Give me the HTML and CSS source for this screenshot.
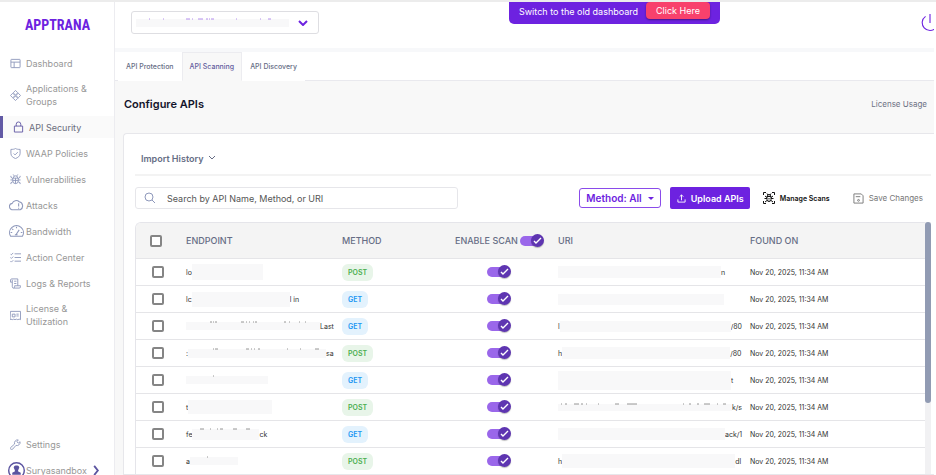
FILE: index.html
```html
<!DOCTYPE html>
<html lang="en">
<head>
    <meta charset="UTF-8">
    <meta name="viewport" content="width=device-width, initial-scale=1.0">
    <title>AppTrana - API Scanning</title>
    <link rel="stylesheet" href="styles.css">
</head>
<body>
    <div class="app">
        <aside class="sidebar">
            <a class="logo" href="#">APPTRANA</a>
            <nav class="menu">
                <a class="menu-item" href="#">
                    <svg viewBox="0 0 24 24"><rect x="2" y="3" width="20" height="18" rx="1"/><path d="M2 9h20M9 9v12"/></svg>
                    <span>Dashboard</span>
                </a>
                <a class="menu-item" href="#">
                    <svg viewBox="0 0 24 24"><path d="M12 1l5 5-5 5-5-5zM12 13l5 5-5 5-5-5zM6 7l5 5-5 5-5-5zM18 7l5 5-5 5-5-5z"/></svg>
                    <span>Applications &amp; Groups</span>
                </a>
                <a class="menu-item active" href="#">
                    <svg viewBox="0 0 24 24"><path d="M3 10h18v13H3zM7 10V6a5 5 0 0 1 10 0v4"/></svg>
                    <span>API Security</span>
                </a>
                <a class="menu-item" href="#">
                    <svg viewBox="0 0 24 24"><path d="M12 1c-3 2-6 2-10 2v9c0 6 5 9 10 11 5-2 10-5 10-11V3c-4 0-7 0-10-2zM8 12l3 3 6-6"/></svg>
                    <span>WAAP Policies</span>
                </a>
                <a class="menu-item" href="#">
                    <svg viewBox="0 0 24 24"><path d="M6 9h12v6a6 6 0 0 1-12 0zM7 9a5 5 0 0 1 10 0M12 9v12M6 14h12M1 13h5M18 13h5M6 10L2 7V4M18 10l4-3V4M6 17l-4 2v3M18 17l4 2v3M9 4L7 1M15 4l2-3"/></svg>
                    <span>Vulnerabilities</span>
                </a>
                <a class="menu-item wide" href="#">
                    <svg viewBox="0 0 28 24"><path d="M8 20a6 6 0 0 1-2-12 8 8 0 0 1 13-3 8 8 0 0 1 2 15H8M18 8v6M18 16v2"/></svg>
                    <span>Attacks</span>
                </a>
                <a class="menu-item wide" href="#">
                    <svg viewBox="0 0 28 24"><path d="M3 21a13 13 0 1 1 22 0zM13 18l6-9M14 3v3M3 14h3M22 14h3M6 7l2 2M11 18h5"/></svg>
                    <span>Bandwidth</span>
                </a>
                <a class="menu-item" href="#">
                    <svg viewBox="0 0 24 24"><path d="M10 4h14M10 12h14M10 20h14M1 4l2 2 4-4M1 12l2 2 4-4M1 20l2 2 4-4"/></svg>
                    <span>Action Center</span>
                </a>
                <a class="menu-item" href="#">
                    <svg viewBox="0 0 24 24"><path d="M5 9H1V4a3 3 0 0 1 3-2h13v15M5 4v15a3 3 0 0 0 3 3h12a3 3 0 0 0 3-3v-2H10v2a3 3 0 0 1-2 3M9 7h5M9 12h5"/></svg>
                    <span>Logs &amp; Reports</span>
                </a>
                <a class="menu-item" href="#">
                    <svg viewBox="0 0 24 24"><path d="M1 3h22v18l-3-1-3 1-3-1-3 1-3-1-3 1-3-1-2 1zM5 9h6v6H5zM14 9h5M14 13h5"/></svg>
                    <span>License &amp; Utilization</span>
                </a>
            </nav>
            <div class="menu menu-bottom">
                <a class="menu-item" href="#">
                    <svg viewBox="0 0 24 24"><path d="M22 6l-4 3-3-3 3-4a7 7 0 0 0-8 9l-9 8a3 3 0 0 0 4 4l8-9a7 7 0 0 0 9-8zM4 20h1"/></svg>
                    <span>Settings</span>
                </a>
                <a class="menu-item user" href="#">
                    <svg class="avatar" viewBox="0 0 24 24"><circle cx="12" cy="12" r="11"/><path class="person" d="M12 5a3 3 0 0 1 3 5l-1 3 4 2v3H6v-3l4-2-1-3a3 3 0 0 1 3-5z"/></svg>
                    <span>Suryasandbox</span>
                    <svg class="chevron" viewBox="0 0 8 12"><path d="M2 1l4 5-4 5"/></svg>
                </a>
            </div>
        </aside>

        <main class="main">
            <header class="topbar">
                <button class="site-select" type="button" aria-label="Select site">
                    <span class="mask site-mask"><svg class="trace" width="160" height="2"><path d="M13 1h1M27 1h1M50 1h4M56 1h1M62 1h5M70 1h2M73 1h1M75 1h3M100 1h1M124 1h1M132 1h3"/></svg></span>
                    <svg class="site-arrow" viewBox="0 0 10 6"><path d="M1 1l4 4 4-4"/></svg>
                </button>
                <div class="switch-banner">
                    <span>Switch to the old dashboard</span>
                    <button type="button">Click Here</button>
                </div>
                <button class="power" type="button" aria-label="Log out">
                    <svg viewBox="0 0 18 18"><path d="M9 1v8M5 3a7 7 0 1 0 8 0"/></svg>
                </button>
            </header>

            <nav class="tabs">
                <a class="tab" href="#">API Protection</a>
                <a class="tab active" href="#">API Scanning</a>
                <a class="tab" href="#">API Discovery</a>
            </nav>

            <div class="page-head">
                <h1>Configure APIs</h1>
                <a href="#">License Usage</a>
            </div>

            <section class="card">
                <button class="history" type="button">
                    Import History
                    <svg viewBox="0 0 10 6"><path d="M2 1l3 3 3-3"/></svg>
                </button>

                <div class="toolbar">
                    <div class="search">
                        <svg viewBox="0 0 12 12"><circle cx="5" cy="5" r="4"/><path d="M8 8l3 3"/></svg>
                        <input type="text" aria-label="Search APIs" placeholder="Search by API Name, Method, or URI">
                    </div>
                    <button class="btn method-filter" type="button">Method: All <span class="caret"></span></button>
                    <button class="btn upload" type="button">
                        <svg viewBox="0 0 10 10"><path d="M1 6v3h8V6M5 7V1M3 3l2-2 2 2"/></svg>
                        Upload APIs
                    </button>
                    <button class="btn manage" type="button">
                        <svg viewBox="0 0 24 24"><path d="M1 6V1h5M18 1h5v5M23 18v5h-5M6 23H1v-5M8 9h8v6a4 4 0 0 1-8 0zM9 8a3 3 0 0 1 6 0M4 8l4 3M20 8l-4 3M3 13h5M16 13h5M4 20l4-3M20 20l-4-3M8 3l2 3M16 3l-2 3M11 13h2M11 16h2"/></svg>
                        Manage Scans
                    </button>
                    <button class="btn save" type="button" disabled>
                        <svg viewBox="0 0 12 12"><path d="M1 1h8l2 2v8H1zM3 4h5"/><circle cx="6" cy="8" r="1"/></svg>
                        Save Changes
                    </button>
                </div>

                <div class="table-wrap">
                    <table>
                        <colgroup>
                            <col class="col-check">
                            <col class="col-endpoint">
                            <col class="col-method">
                            <col class="col-scan">
                            <col class="col-uri">
                            <col>
                        </colgroup>
                        <thead>
                            <tr>
                                <th><input class="check" type="checkbox" aria-label="Select all"></th>
                                <th>ENDPOINT</th>
                                <th>METHOD</th>
                                <th><label class="scan-all">ENABLE SCAN <input class="toggle" type="checkbox" checked></label></th>
                                <th>URI</th>
                                <th>FOUND ON</th>
                            </tr>
                        </thead>
                        <tbody id="api-rows"></tbody>
                    </table>
                    <div class="scrollbar"><div class="thumb"></div></div>
                </div>
            </section>
        </main>
    </div>

    <script>
        // text before the mask, mask width, mask height, text after the mask, marks above the mask
        const apis = [
            { method: 'POST', endpoint: ['lo', 71, 16, ''], uri: ['', 163, 12, 'n'] },
            { method: 'GET', endpoint: ['lc', 98, 15, 'l in'], uri: ['', 166, 11, ''] },
            { method: 'GET', endpoint: ['', 134, 8, 'Last', 'M24 1h2M27 1h1M29 1h2M55 1h3M60 1h1M63 1h1M67 1h1M69 1h2M98 1h2M103 1h1M113 1h1M119 1h1'], uri: ['l', 171, 11, '/80'] },
            { method: 'POST', endpoint: [':', 138, 9, 'sa', 'M25 1h1M27 1h3M58 1h3M63 1h1M66 1h1M70 1h2M99 1h1M112 1h1M127 1h4'], uri: ['h', 168, 12, '/80'] },
            { method: 'GET', endpoint: ['', 82, 8, '', 'M27 1h1'], uri: ['', 173, 19, 't'] },
            { method: 'POST', endpoint: ['t', 84, 14, ''], uri: ['', 174, 7, 'k/s', 'M3 1h1M7 1h2M16 1h5M23 1h2M28 1h1M40 1h1M57 1h4M69 1h10M125 1h1M131 1h2M139 1h2M146 1h6M159 1h1M165 1h3'] },
            { method: 'GET', endpoint: ['fe', 67, 11, 'ck', 'M8 1h4M18 1h1M25 1h1M28 1h3M41 1h4M54 1h4'], uri: ['', 167, 12, 'ack/1'] },
            { method: 'POST', endpoint: ['a', 48, 8, '', 'M17 1h1'], uri: ['h', 173, 14, 'dl'] }
        ];

        const masked = ([before, width, height, after, marks]) => `
            <div class="masked">
                <span>${before}</span>
                <span class="mask" style="width: ${width}px; height: ${height}px">${marks ? `<svg class="trace" width="${width}" height="2"><path d="${marks}"/></svg>` : ''}</span>
                <span>${after}</span>
            </div>`;

        document.getElementById('api-rows').innerHTML = apis.map((api, i) => `
            <tr>
                <td><input class="check" type="checkbox" aria-label="Select API ${i + 1}"></td>
                <td>${masked(api.endpoint)}</td>
                <td><span class="badge ${api.method.toLowerCase()}">${api.method}</span></td>
                <td class="scan"><input class="toggle" type="checkbox" aria-label="Enable scan ${i + 1}" checked></td>
                <td>${masked(api.uri)}</td>
                <td>Nov 20, 2025, 11:34 AM</td>
            </tr>`).join('');
    </script>
</body>
</html>
```
FILE: styles.css
```css
* {
    box-sizing: border-box;
}

body {
    margin: 0;
    font-family: Inter, 'Liberation Sans', sans-serif;
    font-size: 7px;
    color: #333;
    background: white;
}

a {
    color: inherit;
    text-decoration: none;
}

button,
input {
    font-family: inherit;
    margin: 0;
}

button {
    display: flex;
    align-items: center;
    padding: 0;
    border: none;
    background: none;
    cursor: pointer;
}

svg {
    flex-shrink: 0;
    fill: none;
    stroke: currentColor;
}

.app {
    display: flex;
    height: 100vh;
    padding-right: 2px;
    border-top: 2px solid #ececec;
    overflow: hidden;
}

/* Sidebar */
.sidebar {
    display: flex;
    flex-direction: column;
    flex-shrink: 0;
    width: 115px;
    border-right: 1px solid #ececf0;
}

.logo {
    height: 50px;
    padding-left: 25px;
    font-family: 'Liberation Sans Narrow', 'Roboto Condensed', 'DejaVu Sans Condensed', sans-serif;
    font-size: 14px;
    font-weight: bold;
    line-height: 46px;
    color: #6d22e0;
}

.menu {
    display: flex;
    flex-direction: column;
    gap: 4px;
}

.menu-item {
    display: flex;
    align-items: center;
    gap: 5px;
    min-height: 22px;
    padding: 4px 20px 4px 10px;
    font-size: 9px;
    line-height: 13px;
    color: #979797;
}

.menu-item svg {
    width: 11px;
    height: 11px;
    stroke: #8e98bb;
    stroke-width: 2;
}

.menu-item.active {
    padding-left: 10px;
    border-left: 3px solid #625aa5;
    background: #fafafa;
    color: #6a6d7c;
}

.menu-item.active svg {
    height: 12px;
    stroke: #625aa5;
}

.menu-item.wide {
    gap: 2px;
    padding-left: 9px;
}

.menu-item.wide svg {
    width: 15px;
    height: 13px;
}

.menu-bottom {
    margin-top: auto;
    margin-bottom: -7px;
}

.menu-item.user {
    gap: 1px;
    padding: 3px 0 3px 8px;
}

.menu-item .avatar {
    width: 17px;
    height: 17px;
    stroke: #5b54a0;
}

.avatar .person {
    fill: #5b54a0;
    stroke: none;
}

.menu-item .chevron {
    width: 8px;
    margin-left: 4px;
    stroke: #5b54a0;
}

/* Top bar */
.main {
    display: flex;
    flex-direction: column;
    flex: 1;
    min-width: 0;
    background: #f8f8f8;
}

.topbar {
    display: flex;
    justify-content: space-between;
    align-items: flex-start;
    height: 50px;
    flex-shrink: 0;
    padding-left: 16px;
    border-bottom: 4px solid #f7f8fa;
    background: white;
    overflow: hidden;
}

.site-select {
    justify-content: space-between;
    width: 188px;
    height: 23px;
    margin-top: 9px;
    padding: 0 10px 0 4px;
    border: 1px solid #dedee2;
    border-radius: 3px;
    color: #6d22e0;
}

.site-mask {
    width: 153px;
    height: 8px;
}

.site-arrow {
    width: 10px;
    height: 6px;
    stroke-width: 2;
}

.switch-banner {
    display: flex;
    align-items: flex-start;
    gap: 8px;
    height: 22px;
    margin-right: 10px;
    padding: 0 10px;
    border-radius: 0 0 5px 5px;
    background: #6d22e0;
    color: white;
    font-size: 9px;
    line-height: 19px;
}

.switch-banner button {
    height: 17px;
    padding: 0 10px;
    border-radius: 4px;
    background: #f8416c;
    box-shadow: 0 1px 2px rgba(0, 0, 0, 0.4);
    color: white;
    font-size: 9px;
}

.power {
    margin: 11px -6px 0 0;
    color: #6d22e0;
}

.power svg {
    width: 20px;
    height: 20px;
}

/* Tabs */
.tabs {
    display: flex;
    flex-shrink: 0;
    height: 29px;
    padding-left: 3px;
    border-bottom: 1px solid #e9e9ee;
    background: white;
}

.tab {
    height: 29px;
    padding: 0 7px;
    border: 1px solid white;
    font-size: 7px;
    font-weight: 500;
    line-height: 27px;
    color: #666d85;
}

.tab.active {
    border-color: #ececf0;
    border-bottom-color: #f8f8f8;
    background: #f8f8f8;
    color: #645d9d;
}

.page-head {
    display: flex;
    justify-content: space-between;
    align-items: center;
    height: 52px;
    padding: 0 7px 6px 9px;
    flex-shrink: 0;
    font-size: 8px;
    color: #6d7284;
}

.page-head h1 {
    margin: 0;
    font-size: 11px;
    font-weight: 600;
    color: #14142b;
}

/* API card */
.card {
    flex: 1;
    min-height: 0;
    margin-left: 8px;
    padding: 4px 3px 0 11px;
    border: 1px solid #e7e7eb;
    border-right: none;
    border-radius: 4px 0 0 0;
    background: white;
    overflow: hidden;
    display: flex;
    flex-direction: column;
}

.history {
    flex-shrink: 0;
    gap: 4px;
    height: 38px;
    padding: 4px 0 0 6px;
    border-bottom: 2px solid #f3f3f3;
    font-size: 9px;
    font-weight: 600;
    color: #666d85;
}

.history svg {
    width: 10px;
    height: 6px;
}

.toolbar {
    display: flex;
    align-items: center;
    flex-shrink: 0;
    padding: 11px 8px 13px 0;
}

.search {
    display: flex;
    align-items: center;
    gap: 11px;
    width: 41%;
    height: 22px;
    margin-right: auto;
    padding-left: 8px;
    border: 1px solid #e6e6ea;
    border-radius: 3px;
}

.search svg {
    width: 12px;
    height: 12px;
    color: #8e98bb;
}

.search input {
    flex: 1;
    min-width: 0;
    padding: 0;
    border: none;
    outline: none;
    font-size: 9px;
}

.search input::placeholder {
    color: #555;
}

.btn {
    flex-shrink: 0;
    font-weight: 600;
    font-size: 8px;
}

.method-filter {
    gap: 6px;
    height: 20px;
    padding: 0 6px;
    border: 1px solid #8a4bea;
    border-radius: 3px;
    color: #6d22e0;
    font-size: 10px;
}

.caret {
    border: 3px solid transparent;
    border-top-color: #6d22e0;
    border-bottom: none;
}

.upload {
    gap: 5px;
    height: 22px;
    margin-left: 9px;
    padding: 0 6px 0 7px;
    border-radius: 2px;
    background: #6d22e0;
    color: white;
    font-size: 9px;
}

.upload svg {
    width: 9px;
    height: 9px;
}

.manage {
    gap: 5px;
    margin-left: 13px;
    color: #111;
    font-size: 7px;
}

.manage svg {
    width: 12px;
    height: 12px;
    stroke-width: 2;
}

.save {
    gap: 5px;
    margin-left: 23px;
    color: #777;
    font-size: 8px;
    font-weight: 400;
}

.save svg {
    width: 11px;
    height: 11px;
}

/* Table */
.table-wrap {
    display: flex;
    flex: 1;
    min-height: 0;
}

table {
    flex: 1;
    width: 100%;
    height: 252px;
    table-layout: fixed;
    border-collapse: separate;
    border-spacing: 0;
    border: 1px solid #e5e5ea;
    border-right: none;
    border-bottom: none;
    border-radius: 6px 0 0 0;
    overflow: hidden;
}

.col-check {
    width: 44px;
}

.col-endpoint {
    width: 156px;
}

.col-method {
    width: 113px;
}

.col-scan {
    width: 103px;
}

.col-uri {
    width: 192px;
}

th,
td {
    padding: 0 0 0 6px;
    border-bottom: 1px solid #e5e5e8;
    text-align: left;
    white-space: nowrap;
    overflow: hidden;
}

th {
    height: 36px;
    background: #f4f4f4;
    font-size: 9px;
    font-weight: 500;
    color: #666d85;
}

td {
    height: 27px;
}

th:first-child {
    padding-left: 14px;
}

td:first-child {
    padding-left: 16px;
}

.check {
    display: block;
    width: 12px;
    height: 12px;
    appearance: none;
    border: 2px solid #858585;
    border-radius: 2px;
    background: white;
}

.badge {
    display: inline-block;
    padding: 0 6px;
    border-radius: 6px;
    font-size: 7px;
    font-weight: 600;
    line-height: 17px;
}

.badge.post {
    background: #e8f5e9;
    color: #4caf50;
}

.badge.get {
    background: #e3f2fd;
    color: #2196f3;
}

.scan-all {
    display: flex;
    align-items: center;
    gap: 2px;
}

td.scan {
    padding-left: 38px;
}

.toggle {
    position: relative;
    display: block;
    flex-shrink: 0;
    width: 24px;
    height: 14px;
    appearance: none;
}

.toggle::before {
    content: "";
    position: absolute;
    top: 2px;
    left: 0;
    width: 20px;
    height: 10px;
    border-radius: 5px;
    background: #9a67ea;
}

.toggle::after {
    content: "";
    position: absolute;
    top: 0;
    right: 0;
    width: 13px;
    height: 13px;
    border-radius: 50%;
    background: #5e35b1 url("data:image/svg+xml,%3Csvg xmlns='http://www.w3.org/2000/svg' viewBox='0 0 13 13' fill='none' stroke='white' stroke-width='1.4'%3E%3Cpath d='M3 7l2 2 5-5'/%3E%3C/svg%3E");
    box-shadow: 0 1px 1px rgba(0, 0, 0, 0.25);
}

.masked {
    display: flex;
    align-items: center;
}

.mask {
    position: relative;
    flex-shrink: 0;
    background: #f8f8f9;
}

.trace {
    position: absolute;
    top: -1px;
    left: 0;
    opacity: 0.5;
}

.scrollbar {
    width: 6px;
    height: 252px;
    background: #f1f1f3;
}

.thumb {
    height: 72%;
    border-radius: 3px;
    background: #919bb3;
}
```
